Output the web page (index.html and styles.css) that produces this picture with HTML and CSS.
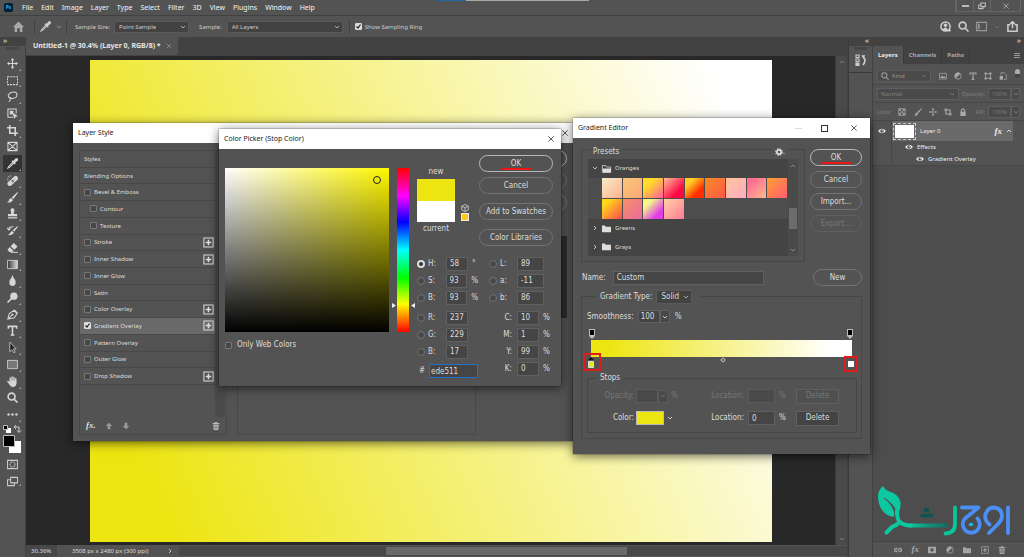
FILE: index.html
```html
<!DOCTYPE html>
<html lang="en">
<head>
<meta charset="utf-8">
<title>Untitled-1 @ 30.4% (Layer 0, RGB/8) *</title>
<link rel="stylesheet" href="styles.css">
</head>
<body>
<svg class="sprite" aria-hidden="true">
  <symbol id="close" viewBox="0 0 12 12"><path d="M2 2l8 8M10 2l-8 8" class="ln"/></symbol>
  <symbol id="chev" viewBox="0 0 12 12"><path d="M2 4l4 4 4-4" class="ln2"/></symbol>
  <symbol id="plus" viewBox="0 0 12 12"><path d="M1 1h10v10H1z" class="ln"/><path d="M6 3v6M3 6h6" class="ln2"/></symbol>
  <symbol id="eye" viewBox="0 0 12 12"><path d="M0 6q6-7 12 0q-6 7-12 0z" class="fl"/><circle cx="6" cy="6" r="2.6" fill="#444"/><circle cx="6.5" cy="5.5" r="1" class="fl"/></symbol>
  <symbol id="trash" viewBox="0 0 12 12"><path d="M1 2.5h10M4.5 1h3" class="ln2"/><path d="M2 4h8l-.6 8H2.600z" class="fl"/><path d="M4.500 5.500v5M6 5.500v5M7.500 5.500v5" stroke="#555" stroke-width=".7"/></symbol>
  <symbol id="folder" viewBox="0 0 12 12"><path d="M0 2h4l1 1.500h7V11H0z" class="fl"/></symbol>
  <symbol id="up" viewBox="0 0 12 12"><path d="M6 1l5 5H8v5H4V6H1z" class="fl"/></symbol>
  <symbol id="search" viewBox="0 0 12 12"><circle cx="5" cy="5" r="3.800" class="ln2"/><path d="M8 8l3.500 3.500" class="ln2"/></symbol>
  <symbol id="move" viewBox="0 0 12 12"><path d="M6 1v10M1 6h10" class="ln"/><path d="M6 0l2 2.500H4zM6 12l2-2.500H4zM0 6l2.500-2v4zM12 6l-2.500-2v4z" class="fl"/></symbol>
  <symbol id="marquee" viewBox="0 0 12 12"><path d="M.5 2h11v8.500H.5z" class="ln" stroke-dasharray="2.200 1"/></symbol>
  <symbol id="lasso" viewBox="0 0 12 12"><path d="M3 8C-1 5 3 1 7.500 1.200S12 7 7 8C4 8.600 2 7 3 6.800s2 2-1 5" class="ln"/></symbol>
  <symbol id="object" viewBox="0 0 12 12"><path d="M7 10H1V1h9v5" class="ln"/><path d="M3 3h4v4H3zM6 5l6 4-2.500.5L8 12z" class="fl"/></symbol>
  <symbol id="crop" viewBox="0 0 12 12"><path d="M3 0v9h9M0 3h9v9" class="ln2"/></symbol>
  <symbol id="frame" viewBox="0 0 12 12"><path d="M1 1.500h10v9H1zM1 1.500l10 9M11 1.500l-10 9" class="ln"/></symbol>
  <symbol id="dropper" viewBox="0 0 12 12"><path d="M7 4L2 9l-1 2 2-1 5-5" class="ln"/><path d="M6 2.500L7.200 3l2-2.500Q11-.5 12 1q.5 1.500-1 2.500L9 5l.5 1-1.200 1L5 3.700z" class="fl"/></symbol>
  <symbol id="heal" viewBox="0 0 12 12"><path d="M3 9.500L9.500 3.500" stroke="currentColor" stroke-width="5" stroke-linecap="round"/><path d="M4.500 5l3.500 3.500M6 8l2-2M5 7l2-2" stroke="#444" stroke-width=".8"/><path d="M1 6Q0 1 5 1" class="ln" stroke-dasharray="1 1"/></symbol>
  <symbol id="brush" viewBox="0 0 12 12"><path d="M11.500 0L12 .8 7 7.500 5 6zM4.200 6.500L6.500 8.500Q5.500 12 0 11.500 2.500 10 2.500 8z" class="fl"/></symbol>
  <symbol id="stamp" viewBox="0 0 12 12"><path d="M4.500 5Q2.800.2 6 .2T7.500 5v1.500H11V9H1V6.500h3.500zM1 10h10v1.500H1z" class="fl"/></symbol>
  <symbol id="history" viewBox="0 0 12 12"><path d="M11.500 1L12 1.800 8 7 6 6zM5.500 6.500l2 1.700Q6 11.500 1 11 3.500 10 3.700 8z" class="fl"/><path d="M2 5q0-3.500 5-3M0 3l2 2.500L4 4" class="ln"/></symbol>
  <symbol id="eraser" viewBox="0 0 12 12"><path d="M7.500 1l4 4-3.500 3.500-4-4zM3 5.500L7 9.500 5.500 11H2.500L.5 8.500z" class="fl"/><path d="M4 11.300h8" class="ln"/></symbol>
  <symbol id="grad" viewBox="0 0 12 12"><linearGradient id="gg"><stop stop-color="#333"/><stop offset="1" stop-color="#ddd"/></linearGradient><path d="M.6 1.500h10.800v9H.6z" fill="url(#gg)" stroke="#ccc"/></symbol>
  <symbol id="drop" viewBox="0 0 12 12"><path d="M6 0q1 3 3 5.500Q11 11.500 6 12 1 11.500 3 5.500 5 3 6 0z" class="fl"/></symbol>
  <symbol id="dodge" viewBox="0 0 12 12"><circle cx="7.500" cy="4.500" r="4" class="fl"/><path d="M5 7l-4.500 4.500" class="ln2"/></symbol>
  <symbol id="pen" viewBox="0 0 12 12"><path d="M.8 11L2.500 5l5-3.500L11 5 8 9.500zM1 11l5-5M8 1l3.500 3.500" class="ln"/><circle cx="6" cy="6" r="1.200" class="fl"/></symbol>
  <symbol id="type" viewBox="0 0 12 12"><path d="M1.500 4V1.500h9V4M6 1.500V11M4 11h4" class="ln2"/></symbol>
  <symbol id="arrow" viewBox="0 0 12 12"><path d="M3 0l7 7.500H7L9 11l-1.500.8L5.500 8.500 3 10.500z" fill="#222" stroke="#ccc" stroke-width=".9"/></symbol>
  <symbol id="rect" viewBox="0 0 12 12"><path d="M.6 1.500h10.800v9H.6z" fill="#777" stroke="#ccc"/></symbol>
  <symbol id="hand" viewBox="0 0 12 12"><path d="M3.500 7V2M5.500 6V1M7.500 6V1.500M9.500 7V3M3.500 9L1 6" stroke="currentColor" stroke-width="1.500" stroke-linecap="round"/><path d="M2.800 5h7.500v3Q10 12 6.500 12T2.800 8z" class="fl"/></symbol>
  <symbol id="dots" viewBox="0 0 12 12"><circle cx="1.700" cy="6" r="1.300" class="fl"/><circle cx="6" cy="6" r="1.300" class="fl"/><circle cx="10.300" cy="6" r="1.300" class="fl"/></symbol>
  <symbol id="mask" viewBox="0 0 12 12"><path d="M.6 1.500h10.800v9H.6z" class="ln"/><circle cx="6" cy="6" r="2.800" class="ln" stroke-dasharray="1 .6"/></symbol>
  <symbol id="screens" viewBox="0 0 12 12"><path d="M4 1.500h7.500v6H4zM4 4H.6v6.500H8v-3" class="ln"/></symbol>
  <symbol id="home" viewBox="0 0 12 12"><path d="M6 .5L12 6.500h-1.800V12H7.500V8h-3v4H1.800V6.500H0z" class="fl"/></symbol>
  <symbol id="half" viewBox="0 0 12 12"><circle cx="6" cy="6" r="4.800" class="ln"/><path d="M9.400 2.600A4.800 4.800 0 1 0 2.600 9.400z" class="fl"/></symbol>
  <symbol id="pic" viewBox="0 0 12 12"><path d="M.6 2h10.800v8.500H.6z" class="ln"/><path d="M2 9l2.500-4 2 2.500L8 6l2 3z" class="fl"/></symbol>
  <symbol id="shape" viewBox="0 0 12 12"><path d="M2.500 2.500h7v7h-7z" class="ln"/><path d="M.8.800h3v3h-3zM8.200.800h3v3h-3zM.8 8.200h3v3h-3zM8.200 8.200h3v3h-3z" class="fl"/></symbol>
  <symbol id="smart" viewBox="0 0 12 12"><path d="M3 5V1h5l3 3v7H7" class="ln"/><path d="M1 6h5v5.500H1z" class="fl"/></symbol>
  <symbol id="check" viewBox="0 0 12 12"><path d="M1 1h10v10H1z" class="ln"/><path d="M2 2h2.600v2.600H2zM7.300 2H10v2.600H7.300zM4.700 4.700h2.600v2.600H4.700zM2 7.300h2.600V10H2zM7.300 7.300H10V10H7.300z" class="fl"/></symbol>
  <symbol id="lock" viewBox="0 0 12 12"><path d="M2 5.500h8V12H2z" class="fl"/><path d="M3.500 6V3.500q2.500-4.500 5 0V6" class="ln2"/></symbol>
  <symbol id="link" viewBox="0 0 12 12"><path d="M5 8.500H3Q.6 8 .6 6T3 3.500h2M7 3.500h2q2.400.5 2.400 2.500T9 8.500H7M3.500 6h5" class="ln2"/></symbol>
  <symbol id="maskfill" viewBox="0 0 12 12"><path fill-rule="evenodd" d="M0 1h12v10H0zM6 3.500a2.500 2.500 0 1 0 .01 0z" class="fl"/></symbol>
  <symbol id="user" viewBox="0 0 12 12"><circle cx="6" cy="6" r="5" class="ln2"/><circle cx="6" cy="4.600" r="2" class="fl"/><path d="M2.500 9.500Q6 5 8.500 9l-1 2h-3z" class="fl"/><path d="M10 8.500v3.500M8.200 10.300H12" class="ln"/></symbol>
  <symbol id="panel" viewBox="0 0 12 12"><path d="M.6 1.500h10.800v9H.6z" class="ln"/><path d="M2 3h2v6H2z" class="fl"/></symbol>
  <symbol id="share" viewBox="0 0 12 12"><path d="M3.500 4H1v7.300h10V4H8.500M6 8V1M3.500 3.200L6 .8l2.500 2.400" class="ln2"/></symbol>
  <symbol id="restore" viewBox="0 0 12 12"><path d="M4.500 1.500H11V7H4.500zM4.500 4.500H1V10h6.500V7" class="ln2"/></symbol>
  <symbol id="gear" viewBox="0 0 12 12"><circle cx="6" cy="6" r="3.200" stroke="currentColor" stroke-width="2.600" fill="none"/><circle cx="6" cy="6" r="5" stroke="currentColor" stroke-width="1.600" stroke-dasharray="2 1.930" fill="none"/></symbol>
  <symbol id="cube" viewBox="0 0 12 12"><path d="M6 .8l5 2.500v5.500l-5 2.600-5-2.600V3.300zM1 3.300l5 2.500 5-2.500M6 6v5" class="ln"/></symbol>
  <symbol id="histpanel" viewBox="0 0 12 12"><path d="M1 1h3v2.500H1zM1 5h3v2.500H1zM1 9h3v2.500H1z" class="ln"/><path d="M1 9h3v3H1zM6 1.500l4-.5-1 3.500z" class="fl"/><path d="M8 3q4 3 0 8" class="ln2"/></symbol>
</svg>

<div class="app">
  <div class="progress"></div>
  <header class="menubar">
    <span class="ps">Ps</span>
    <nav class="menus"><a href="#">File</a><a href="#">Edit</a><a href="#">Image</a><a href="#">Layer</a><a href="#">Type</a><a href="#">Select</a><a href="#">Filter</a><a href="#">3D</a><a href="#">View</a><a href="#">Plugins</a><a href="#">Window</a><a href="#">Help</a></nav>
    <div class="winctl">
      <button aria-label="Minimize"><span class="minus"></span></button><button aria-label="Restore"><svg class="i8"><use href="#restore"/></svg></button><button class="wide" aria-label="Close"><svg class="i8"><use href="#close"/></svg></button>
    </div>
  </header>
  <div class="options">
    <svg class="i10 homeicon"><use href="#home"/></svg>
    <span class="vsep"></span>
    <svg class="i10"><use href="#dropper"/></svg><svg class="i6 dim"><use href="#chev"/></svg>
    <span class="vsep"></span>
    <label for="ssize">Sample Size:</label>
    <select id="ssize" class="sel size"><option>Point Sample</option></select>
    <label for="samp" class="samp">Sample:</label>
    <select id="samp" class="sel layers-sel"><option>All Layers</option></select>
    <span class="vsep"></span>
    <label class="tick"><input type="checkbox" class="cb" checked>Show Sampling Ring</label>
    <div class="opt-right"><svg class="i10"><use href="#user"/></svg><svg class="i10"><use href="#search"/></svg><svg class="i10 dim"><use href="#panel"/></svg><svg class="i6 faint"><use href="#chev"/></svg><svg class="i10"><use href="#share"/></svg></div>
  </div>

  <div class="work">
    <aside class="tools">
      <div class="collapse">»</div>
      <div class="grip"></div>
      <div class="toollist">
        <button aria-label="Move"><svg class="i10"><use href="#move"/></svg></button>
        <button aria-label="Marquee"><svg class="i10"><use href="#marquee"/></svg></button>
        <button aria-label="Lasso"><svg class="i10"><use href="#lasso"/></svg></button>
        <button aria-label="Object selection"><svg class="i10"><use href="#object"/></svg></button>
        <button aria-label="Crop"><svg class="i10"><use href="#crop"/></svg></button>
        <button aria-label="Frame" class="single"><svg class="i10"><use href="#frame"/></svg></button>
        <button aria-label="Eyedropper" class="on"><svg class="i10"><use href="#dropper"/></svg></button>
        <button aria-label="Healing"><svg class="i10"><use href="#heal"/></svg></button>
        <button aria-label="Brush"><svg class="i10"><use href="#brush"/></svg></button>
        <button aria-label="Stamp"><svg class="i10"><use href="#stamp"/></svg></button>
        <button aria-label="History brush"><svg class="i10"><use href="#history"/></svg></button>
        <button aria-label="Eraser"><svg class="i10"><use href="#eraser"/></svg></button>
        <button aria-label="Gradient"><svg class="i10"><use href="#grad"/></svg></button>
        <button aria-label="Blur"><svg class="i10"><use href="#drop"/></svg></button>
        <button aria-label="Dodge"><svg class="i10"><use href="#dodge"/></svg></button>
        <button aria-label="Pen"><svg class="i10"><use href="#pen"/></svg></button>
        <button aria-label="Type"><svg class="i10"><use href="#type"/></svg></button>
        <button aria-label="Path selection"><svg class="i10"><use href="#arrow"/></svg></button>
        <button aria-label="Rectangle"><svg class="i10"><use href="#rect"/></svg></button>
        <button aria-label="Hand"><svg class="i10"><use href="#hand"/></svg></button>
        <button aria-label="Zoom" class="single"><svg class="i10"><use href="#search"/></svg></button>
        <button aria-label="More"><svg class="i10"><use href="#dots"/></svg></button>
      </div>
      <svg class="fgbg" viewBox="0 0 20 34"><path d="M4 4h5v5H4z" fill="#fff"/><path d="M1.500 1.500h4v4h-4z" fill="#000" stroke="#bbb"/><path d="M12 3h5v5M14 1l-2 2 2 2M15 6.500l2 2 2-2" fill="none" stroke="#ccc"/><path d="M7 17h12v12H7z" fill="#fff"/><path d="M1.500 11.500h11v11h-11z" fill="#000" stroke="#bbb"/></svg>
      <div class="modes"><button aria-label="Quick mask" class="single"><svg class="i10"><use href="#mask"/></svg></button><button aria-label="Screen mode"><svg class="i10"><use href="#screens"/></svg></button></div>
    </aside>

    <main class="doc">
      <div class="tabbar"><div class="tab">Untitled-1 @ 30.4% (Layer 0, RGB/8) *<svg class="i6"><use href="#close"/></svg></div></div>
      <div class="stage"><div class="canvas"></div><div class="vscroll"><svg class="i6 flip"><use href="#chev"/></svg><svg class="i6"><use href="#chev"/></svg></div></div>
      <footer class="status"><span class="zoomv">30.36%</span><span class="dims">3508 px x 2480 px (300 ppi)</span><svg class="i6 right"><use href="#chev"/></svg><div class="hscroll"><span></span></div></footer>
    </main>

    <aside class="dock"><div class="collapse end">«</div><div class="dockbox"><div class="grip"></div><svg class="i12"><use href="#histpanel"/></svg></div></aside>

    <aside class="panel">
      <div class="collapse end">»</div>
      <div class="ptabs"><button class="on">Layers</button><button>Channels</button><button>Paths</button><span class="burger"></span></div>
      <div class="prow"><div class="box kind"><svg class="i8"><use href="#search"/></svg><span>Kind</span><svg class="i6 faint"><use href="#chev"/></svg></div><div class="icons"><svg class="i8"><use href="#pic"/></svg><svg class="i8"><use href="#half"/></svg><svg class="i8"><use href="#type"/></svg><svg class="i8"><use href="#shape"/></svg><svg class="i8"><use href="#smart"/></svg></div><span class="toggle"></span></div>
      <div class="prow off"><div class="box blend"><span>Normal</span><svg class="i6"><use href="#chev"/></svg></div><span class="pl">Opacity:</span><div class="box pct">100%</div><div class="box dd"><svg class="i6"><use href="#chev"/></svg></div></div>
      <div class="prow off"><span>Lock:</span><div class="icons lockicons"><svg class="i8"><use href="#check"/></svg><svg class="i8"><use href="#brush"/></svg><svg class="i8"><use href="#move"/></svg><svg class="i8"><use href="#crop"/></svg><svg class="i8"><use href="#lock"/></svg></div><span class="pl">Fill:</span><div class="box pct">100%</div><div class="box dd"><svg class="i6"><use href="#chev"/></svg></div></div>
      <div class="layerlist">
        <div class="layer"><span class="eyecol"><svg class="i8"><use href="#eye"/></svg></span><div class="lbody"><span class="thumb"></span><span>Layer 0</span><i class="fx">fx</i><svg class="i6 flip"><use href="#chev"/></svg></div></div>
        <div class="sub"><span class="eyecol"></span><svg class="i8"><use href="#eye"/></svg><span>Effects</span></div>
        <div class="sub deep"><span class="eyecol"></span><svg class="i8"><use href="#eye"/></svg><span>Gradient Overlay</span></div>
      </div>
      <div class="void">
        <svg class="logo" viewBox="0 0 136 52" role="img" aria-label="Logo"><defs><linearGradient id="stem"><stop stop-color="#0cc7a0"/><stop offset=".4" stop-color="#129a80"/><stop offset="1" stop-color="#0d6b62"/></linearGradient></defs>
          <path d="M6 1Q1 5 1 12 2 29 16 32 18 30 17 27 15 20 7 13 17 19 20 28L22 27Q24 22 23.500 17 22 9 11 6 8 5 6 1z" fill="#0cc7a0"/>
          <path d="M7 13Q18 20 19.500 29" stroke="#4d4d4d" stroke-width="1" fill="none"/>
          <path d="M20 26Q20 36 24 38 28 40.500 34 40.500M9.500 47.500L15 42Q20 40 23 37" stroke="#0cc7a0" stroke-width="4" fill="none" stroke-linecap="round"/>
          <path d="M33 38.500h37q3 2 0 4H33z" fill="url(#stem)"/>
          <ellipse cx="49.500" cy="25" rx="2.800" ry="2.200" fill="#0d5552"/><path d="M45 30.500h9.500" stroke="#0d5552" stroke-width="3.400" stroke-linecap="round"/>
          <path d="M78 22.500V39q0 9-9.500 9.500" stroke="#09c59c" stroke-width="3.800" fill="none" stroke-linecap="round"/>
          <g stroke="#4b8ff5" stroke-width="3.800" fill="none" stroke-linecap="round" stroke-linejoin="round"><path d="M85 22.500h16.500L88 33.500a8.500 8.500 0 1 0 12.500 0"/><path d="M112.500 39.500Q107 35 108.500 29 111 22.500 117 22.500 125 23.500 125 31 125 35 121 39L112 48"/><path d="M131 22.500V48"/></g><ellipse cx="94" cy="39.500" rx="2.400" ry="1.800" fill="#19b8d8"/></svg>
      </div>
      <div class="pfoot"><svg class="i8"><use href="#link"/></svg><i class="fx">fx</i><svg class="i8"><use href="#maskfill"/></svg><svg class="i8"><use href="#half"/></svg><svg class="i8"><use href="#folder"/></svg><svg class="i8"><use href="#plus"/></svg><svg class="i8"><use href="#trash"/></svg></div>
    </aside>
  </div>

  <section class="win style-win">
    <div class="title"><span>Layer Style</span><button class="x" aria-label="Close"><svg class="i8"><use href="#close"/></svg></button></div>
    <div class="style-body">
      <div class="stylebox">
        <div class="stylelist">
          <div>Styles</div>
          <div>Blending Options</div>
          <div><label><input type="checkbox" class="cb">Bevel &amp; Emboss</label></div>
          <div class="ind"><label><input type="checkbox" class="cb">Contour</label></div>
          <div class="ind"><label><input type="checkbox" class="cb">Texture</label></div>
          <div><label><input type="checkbox" class="cb">Stroke</label><button aria-label="Add stroke"><svg class="i10"><use href="#plus"/></svg></button></div>
          <div><label><input type="checkbox" class="cb">Inner Shadow</label><button aria-label="Add inner shadow"><svg class="i10"><use href="#plus"/></svg></button></div>
          <div><label><input type="checkbox" class="cb">Inner Glow</label></div>
          <div><label><input type="checkbox" class="cb">Satin</label></div>
          <div><label><input type="checkbox" class="cb">Color Overlay</label><button aria-label="Add color overlay"><svg class="i10"><use href="#plus"/></svg></button></div>
          <div class="on"><label><input type="checkbox" class="cb" checked>Gradient Overlay</label><button aria-label="Add gradient overlay"><svg class="i10"><use href="#plus"/></svg></button></div>
          <div><label><input type="checkbox" class="cb">Pattern Overlay</label></div>
          <div><label><input type="checkbox" class="cb">Outer Glow</label></div>
          <div><label><input type="checkbox" class="cb">Drop Shadow</label><button aria-label="Add drop shadow"><svg class="i10"><use href="#plus"/></svg></button></div>
        </div>
        <div class="stylefoot"><i class="fx">fx.</i><svg class="i8 dim"><use href="#up"/></svg><svg class="i8 dim flip"><use href="#up"/></svg><svg class="i8 bin"><use href="#trash"/></svg></div>
      </div>
      <div class="settings"></div>
      <div class="style-side"><button class="pill main" aria-label="Accept"></button><button class="pill" aria-label="Dismiss"></button><button class="pill" aria-label="New style"></button><div class="preview"></div></div>
    </div>
  </section>

  <section class="win picker">
    <div class="title"><span>Color Picker (Stop Color)</span><button class="x" aria-label="Close"><svg class="i8"><use href="#close"/></svg></button></div>
    <div class="pick-body">
      <div class="pick-left"><div class="field"><span class="ring"></span></div><label class="tick web"><input type="checkbox" class="cb">Only Web Colors</label></div>
      <div class="hue"><span class="mark"></span><div class="bar"></div><span class="mark back"></span></div>
      <div class="pick-right">
        <div class="pick-top">
          <div class="compare"><span>new</span><div class="pair"><div class="new"></div><div class="cur"></div></div><span>current</span></div>
          <div class="warn"><svg class="i8"><use href="#cube"/></svg><span></span></div>
          <div class="pick-btns"><button class="pill main"><span class="redline">OK</span></button><button class="pill">Cancel</button><button class="pill gap">Add to Swatches</button><button class="pill gap">Color Libraries</button></div>
        </div>
        <div class="vals">
          <div class="vcol">
            <div class="v"><input type="radio" name="m" id="mh" checked><label for="mh">H:</label><input class="t" aria-label="Hue" value="58"><span>°</span></div>
            <div class="v"><input type="radio" name="m" id="ms"><label for="ms">S:</label><input class="t" aria-label="Saturation" value="93"><span>%</span></div>
            <div class="v"><input type="radio" name="m" id="mb"><label for="mb">B:</label><input class="t" aria-label="Brightness" value="93"><span>%</span></div>
            <div class="v split"><input type="radio" name="m" id="mr"><label for="mr">R:</label><input class="t" aria-label="Red" value="237"></div>
            <div class="v"><input type="radio" name="m" id="mg"><label for="mg">G:</label><input class="t" aria-label="Green" value="229"></div>
            <div class="v"><input type="radio" name="m" id="mbl"><label for="mbl">B:</label><input class="t" aria-label="Blue" value="17"></div>
            <div class="hex"><label for="hex">#</label><input class="t" id="hex" value="ede511"></div>
          </div>
          <div class="vcol lab">
            <div class="v"><input type="radio" name="m" id="ml"><label for="ml">L:</label><input class="t" aria-label="Lightness" value="89"></div>
            <div class="v"><input type="radio" name="m" id="ma"><label for="ma">a:</label><input class="t" aria-label="a" value="-11"></div>
            <div class="v"><input type="radio" name="m" id="mlb"><label for="mlb">b:</label><input class="t" aria-label="b" value="86"></div>
            <div class="v c split"><label for="cc">C:</label><input class="t" id="cc" value="10"><span>%</span></div>
            <div class="v c"><label for="cm">M:</label><input class="t" id="cm" value="1"><span>%</span></div>
            <div class="v c"><label for="cy">Y:</label><input class="t" id="cy" value="99"><span>%</span></div>
            <div class="v c"><label for="ck">K:</label><input class="t" id="ck" value="0"><span>%</span></div>
          </div>
        </div>
      </div>
    </div>
  </section>

  <section class="win editor">
    <div class="title"><span>Gradient Editor</span><div class="tbtns"><span class="tmin"></span><span class="tmax"></span><button class="x" aria-label="Close"><svg class="i8"><use href="#close"/></svg></button></div></div>
    <div class="ed-body">
      <div class="ed-top">
        <div class="frame presets">
          <div class="legend"><span>Presets</span><span class="gearwrap"><svg class="i8"><use href="#gear"/></svg>.</span></div>
          <div class="plist">
            <div class="pitems">
              <div class="pfolder"><svg class="i6"><use href="#chev"/></svg><svg class="i10" viewBox="0 0 12 12"><path d="M.5 11V2H5l1 2h5.500v7z" fill="none" stroke="currentColor"/><path d="M1 6h11v5.500H1z" fill="currentColor"/></svg>Oranges</div>
              <div class="swatches"><i class="g1"></i><i class="g2"></i><i class="g3"></i><i class="g4"></i><i class="g5"></i><i class="g6"></i><i class="g7"></i><i class="g8"></i><i class="g9"></i><i class="g10"></i><i class="g11"></i><i class="g12"></i><i class="g13"></i></div>
              <div class="pfolder"><svg class="i6 right"><use href="#chev"/></svg><svg class="i10"><use href="#folder"/></svg>Greens</div>
              <div class="pfolder"><svg class="i6 right"><use href="#chev"/></svg><svg class="i10"><use href="#folder"/></svg>Grays</div>
            </div>
            <div class="pscroll"><svg class="i6 flip"><use href="#chev"/></svg><span></span><svg class="i6"><use href="#chev"/></svg></div>
          </div>
        </div>
        <div class="ed-btns"><button class="pill main"><span class="redline">OK</span></button><button class="pill">Cancel</button><button class="pill">Import...</button><button class="pill" disabled>Export...</button></div>
      </div>
      <div class="namerow"><label for="nm">Name:</label><input class="t" id="nm" value="Custom"><button class="pill">New</button></div>
      <div class="frame gtype">
        <div class="legend"><label for="gt">Gradient Type:</label><select id="gt" class="sel"><option>Solid</option></select></div>
        <div class="smooth"><label for="sm">Smoothness:</label><input class="t" id="sm" value="100"><button class="mini" aria-label="Smoothness options"><svg class="i6"><use href="#chev"/></svg></button><span>%</span></div>
        <div class="ramp">
          <div class="ends"><svg class="stop" viewBox="0 0 6 10"><path d="M0 0h6v7L3 10 0 7z" fill="#bbb"/><path d="M1 1h4v5H1z" fill="#000"/></svg><svg class="stop" viewBox="0 0 6 10"><path d="M0 0h6v7L3 10 0 7z" fill="#bbb"/><path d="M1 1h4v5H1z" fill="#000"/></svg></div>
          <div class="rampbar"></div>
          <div class="ends low"><svg class="stopbox" viewBox="0 0 18 18"><path d="M1 1h16v16H1z" fill="none" stroke="#e01b1b" stroke-width="2"/><path d="M8 4l3 3H5z" fill="#111"/><path d="M5.500 8.500h5v6h-5z" fill="#ede511" stroke="#ddd"/></svg><span class="mid"></span><svg class="stopbox sm" viewBox="0 0 14 16"><path d="M1 1h12v14H1z" fill="none" stroke="#e01b1b" stroke-width="2"/><path d="M4 5h6v6H4z" fill="#fff"/></svg></div>
        </div>
        <div class="frame stops">
          <div class="legend"><span>Stops</span></div>
          <div class="srow disabled"><label for="so">Opacity:</label><span class="cell"><input class="t" id="so" disabled><button class="mini" disabled aria-label="Opacity options"><svg class="i6"><use href="#chev"/></svg></button><span>%</span></span><label for="sl">Location:</label><input class="t loc" id="sl" disabled><span>%</span><button class="del" disabled>Delete</button></div>
          <div class="srow"><span class="slab">Color:</span><span class="cell"><button class="chip" aria-label="Stop color"></button><svg class="i6"><use href="#chev"/></svg></span><label for="sl2">Location:</label><input class="t loc" id="sl2" value="0"><span>%</span><button class="del">Delete</button></div>
        </div>
      </div>
    </div>
  </section>
</div>
</body>
</html>
```
FILE: styles.css
```css
* { box-sizing: border-box; }
body { margin: 0; background: #535353; color: #ddd; font: 6px/8px "Noto Sans", "Open Sans", sans-serif; overflow: hidden; }
button, input, select { font: inherit; color: inherit; margin: 0; padding: 0; border: 0; background: none; min-width: 0; }
input, select, button { border-radius: 0; outline: none; }
a { color: inherit; text-decoration: none; }
svg { display: block; flex: none; overflow: visible; }
.sprite { position: absolute; width: 0; height: 0; }
.ln { fill: none; stroke: currentColor; stroke-width: 1.1; }
.ln2 { fill: none; stroke: currentColor; stroke-width: 1.7; }
.fl { fill: currentColor; }
.i6 { width: 6px; height: 6px; }
.i8 { width: 8px; height: 8px; }
.i10 { width: 11px; height: 11px; }
.i12 { width: 12px; height: 12px; }
.flip { transform: rotate(180deg); }
.right { transform: rotate(-90deg); }
.dim { color: #999; }
.faint { color: #777; }
.fx { font: italic bold 9px/9px "Liberation Serif", serif; }

.app { position: relative; display: flex; flex-direction: column; min-height: 100vh; }
.progress { position: absolute; left: 436px; top: 0; width: 153px; height: 1px; background: linear-gradient(90deg, #2563a8 30px, #a5a8a5 30px); }
.menubar { display: flex; align-items: center; height: 16px; border-bottom: 1px solid #414141; padding-left: 4px; }
.ps { width: 9px; height: 9px; background: #001e36; color: #31a8ff; border-radius: 2px; font: bold 5px/9px "Noto Sans", sans-serif; text-align: center; }
.menus { display: flex; gap: 8px; margin-left: 9px; font-size: 7px; color: #f4f4f4; }
.winctl { display: flex; margin-left: auto; margin-right: 3px; height: 12px; align-self: flex-start; color: #bbb; border: 1px solid #666; border-top: 0; }
.winctl button { width: 17px; display: grid; place-items: center; border-left: 1px solid #666; }
.winctl .wide { width: 30px; }
.minus { width: 7px; height: 2px; background: #bbb; }
.options { display: flex; align-items: center; height: 21px; padding-left: 13px; color: #ccc; }
.homeicon { color: #aaa; margin-right: 10px; }
.options .dim { margin: 0 4px 0 5px; }
.vsep { width: 1px; height: 14px; background: #424242; margin-right: 5px; }
.options .vsep + label { margin-left: 3px; margin-right: 4px; }
.options .samp { margin: 0 5px 0 10px; }
.sel { appearance: none; height: 12px; padding: 0 4px; background: #424242 url("data:image/svg+xml,%3Csvg xmlns='http://www.w3.org/2000/svg' width='6' height='6'%3E%3Cpath d='M1 2l2 2 2-2' fill='none' stroke='%23aaa'/%3E%3C/svg%3E") no-repeat right 2px center; border: 1px solid #5a5a5a; border-radius: 1px; }
.size { width: 75px; }
.layers-sel { width: 116px; margin-right: 6px; }
.tick { display: flex; align-items: center; gap: 4px; }
.options .vsep + .tick { margin: 0; gap: 3px; }
.cb { appearance: none; width: 7px; height: 7px; border: 1px solid #777; border-radius: 1px; background: #474747; flex: none; }
.cb:checked { border-color: #ddd; background: #ddd url("data:image/svg+xml,%3Csvg xmlns='http://www.w3.org/2000/svg' viewBox='0 0 6 6'%3E%3Cpath d='M1 3l1.500 1.500L5 1' fill='none' stroke='%23222' stroke-width='1.200'/%3E%3C/svg%3E") center / 6px 6px; }
.opt-right { display: flex; align-items: center; margin: 0 6px 0 auto; gap: 7px; }
.opt-right .faint, .opt-right .dim { margin: 0; }

.work { flex: 1; display: flex; background: #424242; gap: 1px; }
.collapse { height: 9px; background: #424242; padding-left: 3px; font: bold 7px/7px "Noto Sans", sans-serif; color: #bbb; }
.collapse.end { text-align: right; padding-right: 3px; }
.grip { height: 3px; width: 13px; margin: 1px auto 0; background: #474747; }
.tools { width: 25px; background: #535353; }
.tools .grip { margin: 1px auto 5px; }
.toollist { display: grid; grid-template-rows: repeat(22, 1fr); height: 368px; color: #d6d6d6; }
.tools button { position: relative; display: grid; place-items: center; width: 19px; margin-left: 3px; }
.tools button::after { content: ""; position: absolute; right: 1px; bottom: 1px; border: 1px solid; border-color: transparent #aaa #aaa transparent; }
.tools .single::after { display: none; }
.tools .on { background: #333; }
.fgbg { width: 20px; height: 34px; margin: 1px 0 0 2px; }
.modes { display: grid; gap: 6px; margin-top: 1px; color: #ccc; }

.doc { flex: 1; display: flex; flex-direction: column; min-width: 0; }
.tabbar { height: 19px; display: flex; }
.tab { display: flex; align-items: center; gap: 5px; background: #535353; padding: 0 6px 0 7px; font-size: 7px; font-weight: bold; color: #e6e6e6; height: 18px; }
.tab svg { color: #aaa; }
.stage { flex: 1; display: flex; background: #282828; padding-left: 64px; }
.canvas { flex: 1; margin: 4px 63px 3px 0; background: linear-gradient(67deg, #ede511 9%, #fff 93%); }
.vscroll { width: 12px; background: #4a4a4a; display: flex; flex-direction: column; justify-content: space-between; align-items: center; padding: 3px 0; color: #888; border-left: 1px solid #3c3c3c; }
.status { display: flex; align-items: center; height: 12px; background: #535353; }
.zoomv { width: 31px; padding-left: 5px; background: #484848; line-height: 12px; }
.dims { padding-left: 15px; width: 110px; }
.hscroll { flex: 1; height: 10px; margin-left: 6px; background: #484848; padding: 1px 220px 1px 207px; }
.hscroll span { display: block; height: 8px; background: #696969; }

.dock { width: 24px; background: #535353; border-left: 1px solid #3a3a3a; }
.dockbox { height: 26px; border-bottom: 1px solid #3a3a3a; color: #ccc; }
.dockbox svg { margin: 4px auto; }
.panel { width: 151px; display: flex; flex-direction: column; background: #535353; }
.ptabs { display: flex; height: 18px; background: #424242; margin-bottom: 3px; }
.ptabs button { padding: 0 5px; border-right: 1px solid #3a3a3a; color: #aaa; font-weight: bold; }
.ptabs .on { background: #535353; color: #eee; }
.burger { width: 6px; height: 5px; margin: 7px 4px 0 auto; border: solid #999; border-width: 1px 0; background: linear-gradient(#999, #999) center / 100% 1px no-repeat; }
.prow { display: flex; align-items: center; height: 18px; padding: 0 4px; border-bottom: 1px solid #474747; color: #999; }
.off { color: #808080; }
.box { display: flex; align-items: center; justify-content: space-between; height: 12px; border: 1px solid #5e5e5e; background: #4a4a4a; padding: 0 3px; }
.kind { width: 54px; }
.kind span { margin-right: auto; padding-left: 3px; }
.icons { display: flex; flex: 1; justify-content: space-between; padding: 0 8px 0 8px; color: #aaa; }
.prow .lockicons { flex: none; width: 76px; padding: 0 0 0 7px; gap: 6px; color: #aaa; }
.toggle { width: 5px; height: 9px; border-radius: 3px; background: linear-gradient(#aaa 5px, #444 5px); align-self: flex-start; margin-top: 2px; }
.blend { width: 82px; }
.pl { margin-left: auto; margin-right: 3px; }
.pct { width: 23px; color: #777; }
.dd { width: 9px; padding: 0 1px; }
.layerlist { color: #eee; margin-right: 11px; }
.layer { display: flex; height: 20px; }
.eyecol { width: 19px; display: grid; place-items: center; border-right: 1px solid #474747; flex: none; align-self: stretch; }
.lbody { flex: 1; display: flex; align-items: center; background: #6a6a6a; padding: 0 1px 0 1px; gap: 4px; }
.lbody .fx { margin-left: auto; }
.thumb { width: 23px; height: 17px; background: #fff; border: 2px solid #6a6a6a; outline: 1px dashed #ccc; outline-offset: -1px; }
.sub { display: flex; align-items: center; height: 12px; }
.sub svg { margin: 0 4px 0 13px; }
.deep svg { margin-left: 24px; }
.void { flex: 1; background: #4d4d4d; display: flex; align-items: flex-end; border-top: 1px solid #484848; padding: 0 10px 4px 4px; }
.logo { width: 136px; height: 52px; }
.pfoot { display: flex; align-items: center; justify-content: space-between; height: 16px; padding: 0 18px 0 21px; color: #a5a5a5; border-top: 1px solid #424242; }

.win { position: absolute; background: #535353; box-shadow: 0 2px 10px rgba(0, 0, 0, .6), 0 0 1px #222; color: #ddd; font: 8px/10px "DejaVu Sans Condensed", "DejaVu Sans", sans-serif; }
.title { display: flex; align-items: center; justify-content: space-between; height: 20px; background: #fff; color: #222; padding: 0 6px 0 5px; font: 7px/10px "Noto Sans", sans-serif; }
.style-win { left: 73px; top: 123px; width: 500px; height: 318px; }
.picker { left: 219px; top: 129px; width: 342px; height: 257px; }
.editor { left: 573px; top: 118px; width: 297px; height: 336px; }
.title .x { color: #222; }
.pill { height: 17px; border: 1px solid #737373; border-radius: 9px; color: #ddd; white-space: nowrap; }
.pill.main { border: 1px solid #bbb; }
.pill:disabled, .disabled { color: #777; }
.pill:disabled { border-color: #606060; }
.redline { padding: 0 10px; border-bottom: 2px solid #ed1616; }
.t { height: 14px; border: 1px solid #606060; background: #454545; padding: 0 3px; color: #ddd; }

.style-win .title { padding-right: 4px; }
.style-body { display: flex; padding: 7px 6px 6px; height: 298px; font: 6px/8px "Noto Sans", sans-serif; }
.stylebox { width: 148px; border: 1px solid #484848; display: flex; flex-direction: column; justify-content: space-between; background: linear-gradient(#4a4a4a, #4a4a4a) right 1px top / 10px 266px no-repeat; }
.stylelist { display: grid; grid-template-rows: repeat(14, 1fr); height: 234px; width: 135px; background: #535353; }
.stylelist > div { display: flex; align-items: center; justify-content: space-between; border-bottom: 1px solid #484848; padding: 0 1px 0 4px; }
.stylelist label { display: flex; align-items: center; gap: 3px; }
.stylelist .ind { padding-left: 10px; }
.stylelist .on { background: #696969; }
.stylefoot { display: flex; align-items: center; gap: 9px; padding: 0 6px 4px; }
.bin { margin-left: auto; color: #bbb; }
.settings { width: 239px; margin-left: 10px; border: 1px solid #494949; }
.style-side { flex: 1; margin-left: 16px; display: flex; flex-direction: column; gap: 5px; }
.preview { margin-top: 20px; height: 82px; background: #2d2d2d; width: 75px; }

.pick-body { display: flex; padding-left: 6px; color: #ddd; }
.pick-left { padding-top: 19px; }
.field { position: relative; width: 164px; height: 164px; background: linear-gradient(0deg, #000, transparent), linear-gradient(90deg, #fff, #fff700); }
.ring { position: absolute; left: 148px; top: 8px; width: 8px; height: 8px; border: 1px solid #222; border-radius: 50%; }
.web { margin-top: 8px; gap: 5px; }
.hue { display: flex; padding: 19px 0 0 3px; width: 28px; height: 183px; }
.bar { width: 12px; background: linear-gradient(red, #f0f 17%, #00f 33%, #0ff 50%, #0f0 67%, #ff0 83%, red); }
.mark { margin: 135px 1px 0 0; width: 4px; height: 5px; background: #eee; clip-path: polygon(0 0, 100% 50%, 0 100%); }
.back { margin: 135px 0 0 2px; clip-path: polygon(100% 0, 0 50%, 100% 100%); }
.pick-right { flex: 1; padding-top: 6px; }
.pick-top { display: flex; }
.compare { width: 38px; display: flex; flex-direction: column; align-items: center; gap: 2px; padding-top: 12px; }
.pair { width: 38px; height: 43px; display: grid; grid-template-rows: 1fr 1fr; }
.new { background: #ede511; }
.cur { background: #fff; }
.warn { margin: 49px 10px 0 6px; }
.warn span { display: block; width: 8px; height: 8px; background: #ffc91f; border: 1px solid #eee; margin-top: 1px; }
.pick-btns { width: 74px; display: flex; flex-direction: column; gap: 5px; }
.pick-btns .gap { margin-top: 4px; }
.vals { display: flex; gap: 11px; margin-top: 9px; }
.vcol { width: 61px; }
.v { display: flex; align-items: center; height: 17px; }
.split { margin-top: 3px; }
.v input[type=radio] { appearance: none; width: 8px; height: 8px; border: 1px solid #737373; border-radius: 50%; background: #484848; flex: none; }
.v input[type=radio]:checked { border: 2px solid #ddd; background: #333; }
.v label { width: 18px; margin-left: 3px; }
.v .t { width: 22px; }
.v span { margin-left: 4px; }
.lab { width: 64px; }
.lab .v label { width: 17px; }
.lab .t { width: 27px; }
.lab .c .t { width: 22px; }
.lab .c label { width: 23px; margin: 0 5px 0 0; text-align: right; }
.hex { display: flex; align-items: center; margin-top: 4px; padding-left: 2px; gap: 4px; }
.hex .t { width: 50px; border-color: #2370c8; padding: 0 1px; }

.tbtns { display: flex; align-items: center; gap: 19px; }
.tmin { width: 7px; height: 1px; background: #ddd; }
.tmax { width: 7px; height: 7px; border: 1px solid #333; }
.editor .title { padding-right: 12px; }
.title .tbtns .x { margin-left: 3px; }
.ed-body { padding: 11px 8px 0 8px; }
.ed-top { display: flex; justify-content: space-between; }
.frame { border: 1px solid #464646; }
.presets { width: 224px; height: 113px; padding: 0 6px 5px; }
.legend { display: flex; align-items: center; justify-content: space-between; }
.presets .legend { margin-top: -5px; height: 14px; padding: 0 10px 0 2px; }
.legend > span { background: #535353; padding: 0 3px; }
.gearwrap { display: flex; align-items: center; }
.plist { display: flex; height: 97px; background: #444; font: 6px/8px "Noto Sans", sans-serif; }
.pitems { flex: 1; display: flex; flex-direction: column; }
.pfolder { flex: 1; display: flex; align-items: center; padding-left: 4px; gap: 4px; }
.pfolder svg:nth-child(2) { width: 9px; height: 9px; }
.swatches { display: grid; grid-template-columns: repeat(9, 1fr); grid-auto-rows: 20px; gap: 1px; padding: 0 1px 0 14px; background: #4d4d4d; }
.g1 { background: linear-gradient(135deg, #f7ecc8, #ffb08c); }
.g2 { background: linear-gradient(135deg, #f5c878, #ffa676); }
.g3 { background: linear-gradient(135deg, #ffdc28 30%, #ff5aa0); }
.g4 { background: linear-gradient(135deg, #ffbd9c, #ff0844 70%); }
.g5 { background: linear-gradient(135deg, #fc2 25%, #ff2d00 70%); }
.g6 { background: linear-gradient(135deg, #f78c24, #ff5849); }
.g7 { background: linear-gradient(135deg, #ffc59c, #ffabc0); }
.g8 { background: linear-gradient(135deg, #ff6e90 20%, #ffb98e); }
.g9 { background: linear-gradient(135deg, #ffa032, #ff5c70); }
.g10 { background: linear-gradient(135deg, #ffd81a 20%, #ff4752); }
.g11 { background: linear-gradient(135deg, #f59168, #eb6a9c); }
.g12 { background: linear-gradient(135deg, #f6f58c 25%, #e03ee8 75%); }
.g13 { background: linear-gradient(135deg, #ffd2a6, #ff7a94); }
.pscroll { width: 10px; background: #4a4a4a; display: flex; flex-direction: column; align-items: center; padding: 4px 0 3px; color: #999; }
.pscroll span { width: 8px; height: 21px; background: #6c6c6c; margin: 39px 0 auto; }
.ed-btns { width: 52px; display: flex; flex-direction: column; gap: 5px; }
.namerow { display: flex; align-items: center; margin-top: 7px; padding-left: 1px; }
.namerow .t { width: 151px; margin-left: 7px; }
.namerow .pill { width: 49px; margin-left: auto; }
.gtype { height: 143px; margin-top: 10px; padding: 0 4px 0 5px; }
.gtype > .legend { justify-content: flex-start; height: 14px; margin-top: -7px; background: #535353; width: 106px; margin-left: 8px; padding-left: 5px; gap: 4px; white-space: nowrap; }
.legend .sel { width: 36px; height: 14px; }
.smooth { display: flex; align-items: center; margin-top: 6px; }
.smooth .t { width: 22px; margin-left: 4px; padding: 0 2px; height: 13px; }
.mini { width: 10px; height: 13px; background: #484848; border: 1px solid #606060; display: grid; place-items: center; }
.smooth span { margin-left: 5px; }
.ramp { margin: 6px 5px 0 4px; }
.ends { display: flex; justify-content: space-between; }
.ramp > .ends:first-child { margin: 0 -1px 0 -2px; height: 11px; }
.stop { width: 6px; height: 10px; }
.rampbar { height: 17px; background: linear-gradient(90deg, #ede511 6%, #fff 92%); }
.low { margin: -4px -6px 0 -8px; height: 18px; align-items: flex-start; }
.stopbox { width: 18px; height: 18px; }
.sm { width: 14px; height: 16px; margin-top: 3px; }
.mid { width: 4px; height: 4px; border: 1px solid #bbb; transform: rotate(45deg); margin-top: 5px; }
.stops { margin-top: 7px; height: 55px; padding: 0 4px; }
.stops .legend { height: 10px; margin: -6px 0 2px 5px; }
.srow { display: flex; align-items: center; height: 22px; }
.srow > label:first-child, .slab { width: 42px; text-align: right; }
.cell { display: flex; align-items: center; width: 63px; margin-left: 2px; gap: 3px; }
.cell .t { width: 22px; }
.cell .mini { margin-left: -3px; }
.cell + label { width: 45px; text-align: right; }
.disabled .t, .disabled .mini { background: #4a4a4a; border-color: #5a5a5a; }
.loc { width: 27px; margin: 0 4px 0 4px; }
.chip { width: 28px; height: 14px; background: #ede511; border: 1px solid #bbb; }
.del { width: 43px; height: 15px; margin-left: auto; margin-right: 13px; background: #444; border: 1px solid #606060; }
.disabled .del { background: #505050; }
```
